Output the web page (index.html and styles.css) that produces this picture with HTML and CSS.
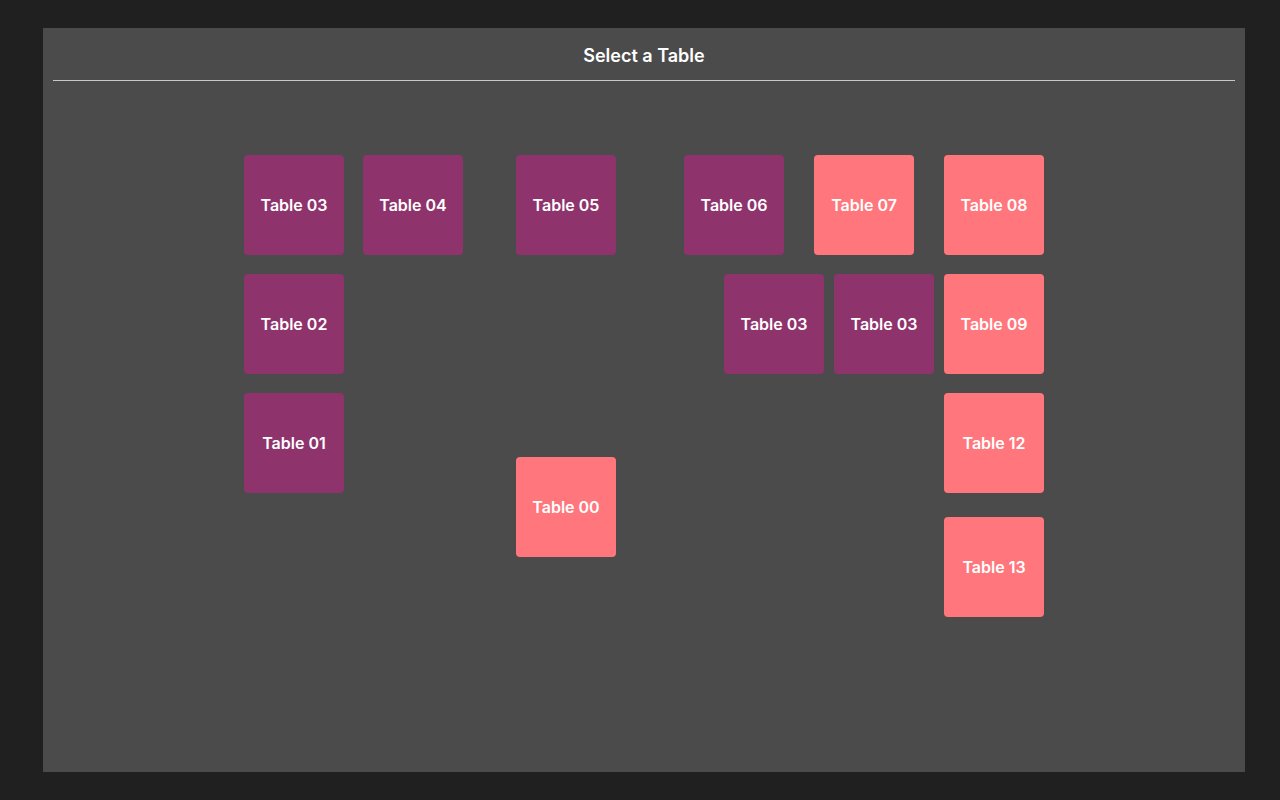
FILE: index.html
```html
<!DOCTYPE html>
<html lang="en">
<head>
    <meta charset="UTF-8">
    <meta name="viewport" content="width=device-width, initial-scale=1.0">
    <title>Select a Table</title>
    <link rel="stylesheet" href="styles.css">
</head>
<body>
    <div class="pannello">
        <!-- Titolo -->
        <div class="testata">Select a Table</div>
        <!-- Pianta della sala -->
        <div class="sala">
            <div class="tavolo occupato" style="left: 201px; top: 74px;">Table 03</div>
            <div class="tavolo occupato" style="left: 320px; top: 74px;">Table 04</div>
            <div class="tavolo occupato" style="left: 473px; top: 74px;">Table 05</div>
            <div class="tavolo occupato" style="left: 641px; top: 74px;">Table 06</div>
            <div class="tavolo libero" style="left: 771px; top: 74px;">Table 07</div>
            <div class="tavolo libero" style="left: 901px; top: 74px;">Table 08</div>
            <div class="tavolo occupato" style="left: 201px; top: 193px;">Table 02</div>
            <div class="tavolo occupato" style="left: 681px; top: 193px;">Table 03</div>
            <div class="tavolo occupato" style="left: 791px; top: 193px;">Table 03</div>
            <div class="tavolo libero" style="left: 901px; top: 193px;">Table 09</div>
            <div class="tavolo occupato" style="left: 201px; top: 312px;">Table 01</div>
            <div class="tavolo libero" style="left: 901px; top: 312px;">Table 12</div>
            <div class="tavolo libero" style="left: 473px; top: 376px;">Table 00</div>
            <div class="tavolo libero" style="left: 901px; top: 436px;">Table 13</div>
        </div>
    </div>
</body>
</html>
```

FILE: styles.css
```css
:root{
    --bg-color: #202020;
    --panel-color: #4b4b4b;
    --text-color: #ffffff;
    --line-color: #c8c8c8;
    --occupato-color: #8e336c;
    --libero-color: #ff777d;
}
html, body{
    height: 100%;
}
body{
    margin: 0;
    background-color: var(--bg-color);
    color: var(--text-color);
    font-family: Inter, "Noto Sans", sans-serif;
    box-sizing: border-box;
    padding: 28px 35px 28px 43px;
}
.pannello{
    background-color: var(--panel-color);
    height: 100%;
    display: flex;
    flex-direction: column;
}
.testata{
    margin: 0 10px;
    height: 53px;
    box-sizing: border-box;
    border-bottom: 1px solid var(--line-color);
    display: flex;
    align-items: center;
    justify-content: center;
    padding-top: 2px;
    font-size: 18px;
    font-weight: 600;
}
.sala{
    position: relative;
    flex: 1;
}
.tavolo{
    position: absolute;
    width: 100px;
    height: 100px;
    border-radius: 4px;
    display: flex;
    align-items: center;
    justify-content: center;
    font-size: 16px;
    font-weight: 600;
}
.occupato{
    background-color: var(--occupato-color);
}
.libero{
    background-color: var(--libero-color);
}
```
